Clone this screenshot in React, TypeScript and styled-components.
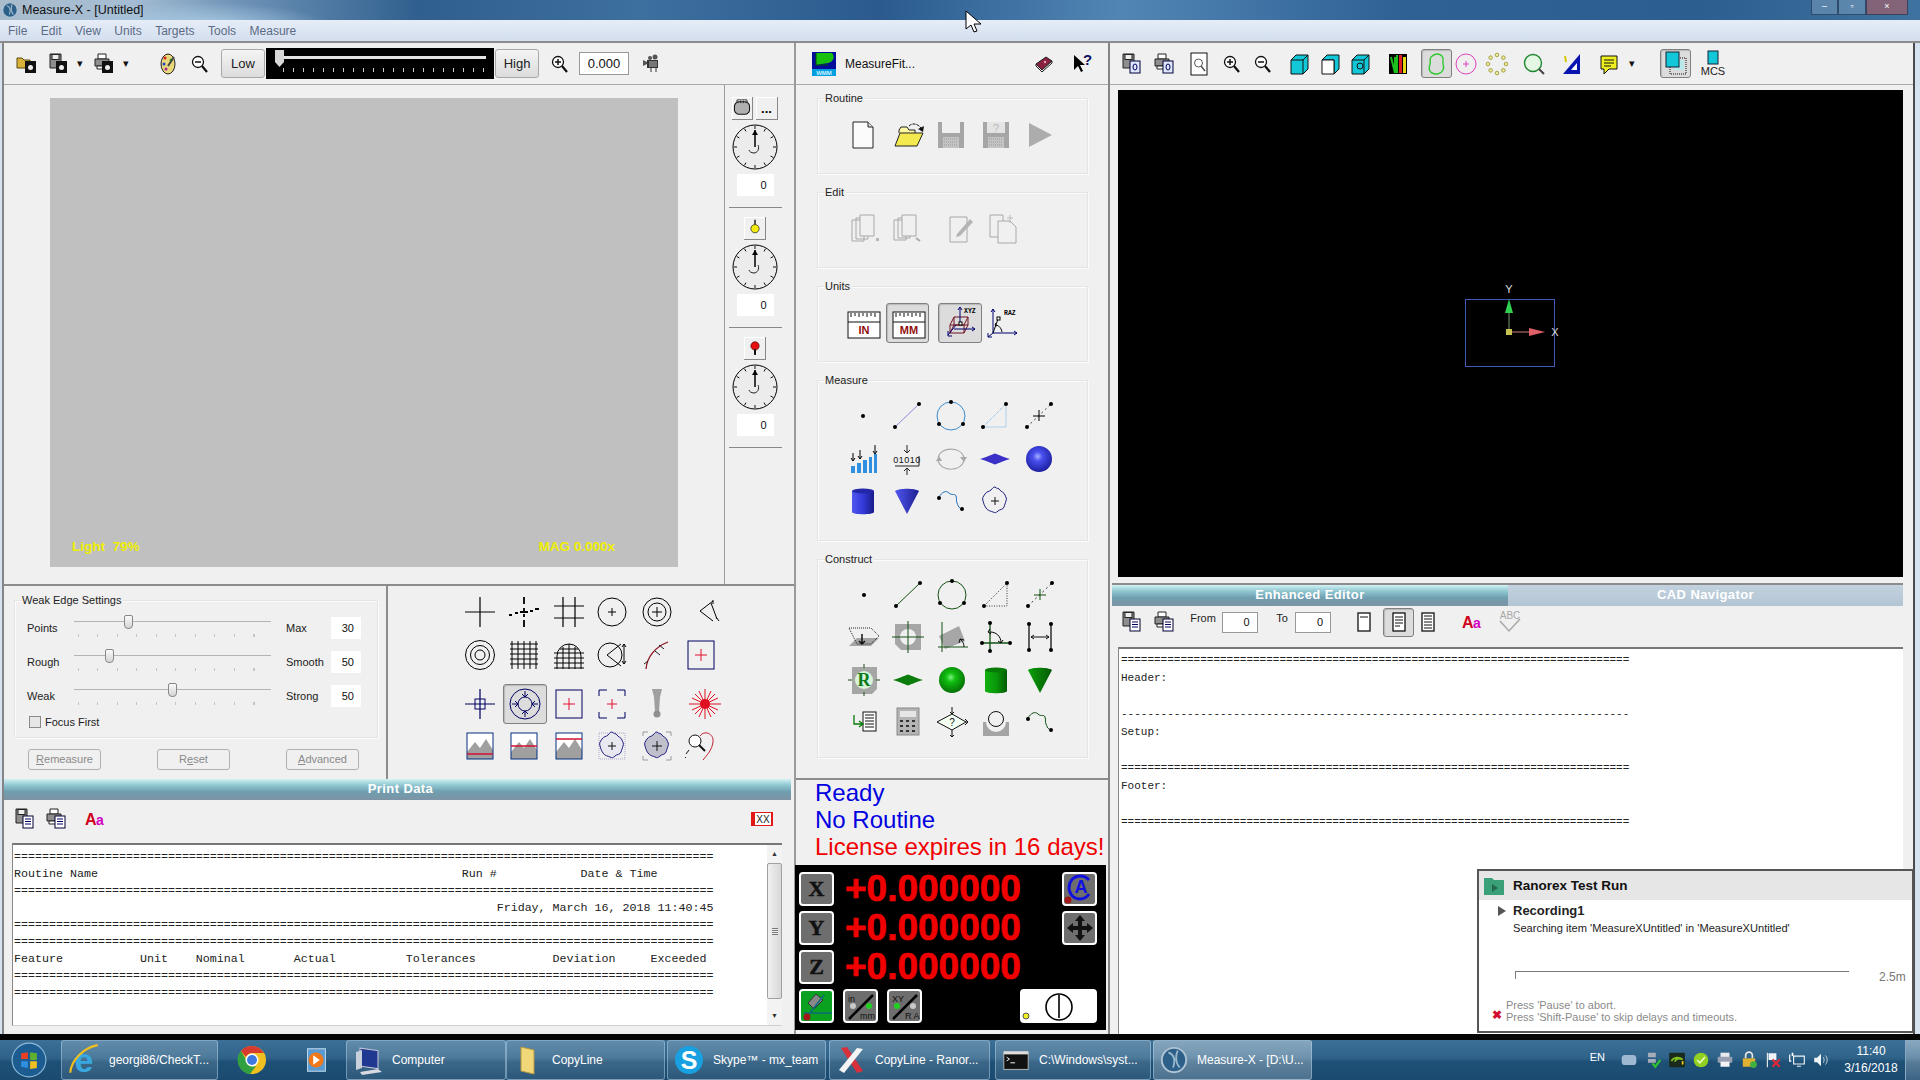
import React, { FC, ReactNode } from 'react';
import styled, { createGlobalStyle } from 'styled-components';

const GlobalStyle = createGlobalStyle`
  html, body {
    margin: 0;
    width: 1920px;
    height: 1080px;
    overflow: hidden;
    background: #000;
    font-family: "Liberation Sans", Arial, sans-serif;
  }
  * { box-sizing: border-box; }
`;

const Screen = styled.div`
  position: relative;
  width: 1920px;
  height: 1080px;
  display: flex;
  flex-direction: column;
  background: #000;
`;
const TitleBar = styled.div`
  height: 20px;
  display: flex;
  align-items: center;
  padding-left: 1px;
  gap: 3px;
  font-size: 12.5px;
  color: #111;
  background:
    radial-gradient(ellipse 130px 24px at 200px 26px, #a9cbe4 0, rgba(169, 203, 228, 0) 100%),
    linear-gradient(90deg, #a9bccd 0, #a5bdd3 130px, #6d92b6 240px, #2f5f8e 420px, #3d6f9f 640px, #2b5b8e 880px, #5186b4 1120px, #2f6195 1400px, #2c5e90 1700px, #3f739f 1920px);
`;
const TitleButtons = styled.div`
  margin-left: auto;
  margin-right: 12px;
  display: flex;
  align-self: flex-start;
`;
const TitleButton = styled.div<{ $w: number; $c: string }>`
  width: ${(p) => p.$w}px;
  height: 15px;
  border: 1px solid rgba(30, 50, 80, 0.7);
  border-top: 0;
  background: ${(p) => p.$c};
  color: #fff;
  font-size: 9px;
  line-height: 13px;
  text-align: center;
`;
const MenuBar = styled.div`
  height: 21px;
  display: flex;
  align-items: center;
  gap: 13.5px;
  padding-left: 8px;
  font-size: 12px;
  color: #5c6c86;
  background: linear-gradient(#e6edf7, #d3deee);
`;
const Workspace = styled.div`
  height: 993px;
  display: grid;
  grid-template-columns: 794px 314px 1fr;
  padding: 0 5px 0 2px;
  border-top: 2px solid #8c8c8c;
  background: #d7e2f0;
`;
const Gap = styled.div`
  height: 6px;
  background: #050505;
`;
const Taskbar = styled.div`
  height: 40px;
  display: flex;
  align-items: stretch;
  color: #fff;
  font-size: 12px;
  background: linear-gradient(#3c7096 0, #2e6289 45%, #1e5076 55%, #1a4a70 100%);
`;

const LeftCol = styled.div`
  display: flex;
  flex-direction: column;
  background: #f0f0f0;
  border-left: 2px solid #858585;
  border-right: 2px solid #9a9a9a;
`;
const MidCol = styled.div`
  display: flex;
  flex-direction: column;
  background: #f0f0f0;
  border-right: 2px solid #858585;
`;
const RightCol = styled.div`
  display: flex;
  flex-direction: column;
  background: #f0f0f0;
  border-right: 2px solid #4a4a4a;
`;
const TopBar = styled.div`
  height: 42px;
  flex: none;
  display: flex;
  align-items: center;
  border-bottom: 1px solid #a8a8a8;
`;

const RowBox = styled.div<{ $mt?: number; $h?: number }>`
  display: flex;
  align-items: center;
  height: ${(p) => p.$h ?? 32}px;
  margin-top: ${(p) => p.$mt ?? 0}px;
  flex: none;
`;
const Tool = styled.div<{ $ml: number; $w: number; $h: number; $on?: boolean }>`
  flex: none;
  margin-left: ${(p) => p.$ml}px;
  width: ${(p) => p.$w}px;
  height: ${(p) => p.$h}px;
  display: flex;
  align-items: center;
  justify-content: center;
  font-size: 11px;
  color: #111;
  border-radius: 3px;
  ${(p) =>
    p.$on
      ? 'background:#dcdcdc;border:1px solid #808080;box-shadow:inset 1px 1px 1px #b8b8b8;'
      : ''}
`;
const Svg = styled.svg`
  display: block;
  flex: none;
  overflow: visible;
`;

type Item = { x: number; n?: string; w?: number; h?: number; on?: boolean; node?: ReactNode };

const Icon: FC<{ n: string; s?: number }> = ({ n, s = 32 }) => (
  <Svg viewBox="0 0 32 32" width={s} height={s}>
    {G[n]}
  </Svg>
);

const ToolRow: FC<{ origin: number; items: Item[]; mt?: number; h?: number }> = ({ origin, items, mt, h }) => {
  let cur = origin;
  return (
    <RowBox $mt={mt} $h={h}>
      {items.map((it, i) => {
        const w = it.w ?? 32;
        const ml = it.x - w / 2 - cur;
        cur = it.x + w / 2;
        return (
          <Tool key={i} $ml={ml} $w={w} $h={it.h ?? 32} $on={it.on}>
            {it.node ?? (it.n ? <Icon n={it.n} /> : null)}
          </Tool>
        );
      })}
    </RowBox>
  );
};

/* small shared drawings */
const dot = (x: number, y: number, c = '#000', r = 2) => <circle cx={x} cy={y} r={r} fill={c} />;
const floppy = (
  <>
    <path d="M8 6h11v14H8z" fill="#8e8e8e" stroke="#222" />
    <rect x="10" y="6.5" width="7" height="5" fill="#eee" stroke="#222" />
  </>
);
const printer = (
  <>
    <path d="M10 6h8v5h-8z" fill="#fff" stroke="#222" />
    <path d="M7 11h14v7H7z" fill="#8e8e8e" stroke="#222" />
    <path d="M9 18h9v3H9z" fill="#fff" stroke="#222" />
  </>
);
const listBadge = (
  <>
    <rect x="15" y="13" width="10" height="12" fill="#fff" stroke="#003" />
    <path d="M17 16h6M17 18.500h6M17 21h6" stroke="#006" />
  </>
);
const zeroBadge = (
  <>
    <rect x="15" y="13" width="10" height="12" fill="#dfe6ff" stroke="#003" />
    <ellipse cx="20" cy="19" rx="2" ry="3" fill="none" stroke="#005" />
  </>
);
const camBadge = (
  <>
    <rect x="14" y="13" width="11" height="12" fill="#111" />
    <circle cx="19.500" cy="19.500" r="2.500" fill="#eee" />
  </>
);
const mag = (sign: string) => (
  <>
    <circle cx="15" cy="14" r="5.500" fill="#fff" stroke="#111" strokeWidth="1.300" />
    <path d="M19 18l5 6" stroke="#111" strokeWidth="2.200" />
    <path d={sign} stroke="#111" strokeWidth="1.500" />
  </>
);
const Aa = (
  <>
    <text x="6" y="22" fontFamily="Liberation Sans" fontWeight="700" fontSize="16" fill="#d00020">
      A
    </text>
    <text x="17" y="22" fontFamily="Liberation Sans" fontWeight="700" fontSize="14" fill="#d000c0">
      a
    </text>
  </>
);
const wiggly = 'M4 12c3-5 7-7 10-4s6 0 7 3 0 5 1 7 1 4 3 5';
const blobPath = 'M16 2c2 2 4 1 5 3s4 2 5 5 2 3 1 6-1 3-2 6-4 2-6 4-3 2-5 1-5-1-7-4-2-4-3-7 0-4 2-7 4-2 6-4 2-3 4-3z';
const mount = (line: number) => (
  <>
    <rect x="3" y="3" width="26" height="26" fill="#fff" />
    <path d="M3 22l8-10 5 6 6-9 7 11v9H3z" fill="#a0a0a0" />
    <rect x="3" y="3" width="26" height="26" fill="none" stroke="#003080" />
    <path d={`M3 ${line}h26`} stroke="#d01030" strokeWidth="1.500" />
  </>
);
const ruler = (t: string) => (
  <>
    <rect x="1" y="5" width="32" height="26" fill="#fff" stroke="#111" />
    <path d="M1 15h32" stroke="#111" />
    <path d="M4 6v4M8 6v3M12 6v4M16 6v3M20 6v4M24 6v3M28 6v4" stroke="#111" />
    <text x="17" y="27" textAnchor="middle" fontFamily="Liberation Sans" fontWeight="700" fontSize="11" fill="#901010">
      {t}
    </text>
  </>
);

const G: Record<string, ReactNode> = {
  openCam: (
    <>
      <path d="M6 10h5l2 2h6v8H6z" fill="#d9b23a" stroke="#5a4a10" />
      {camBadge}
    </>
  ),
  saveCam: <>{floppy}{camBadge}</>,
  printCam: <>{printer}{camBadge}</>,
  palette: (
    <>
      <ellipse cx="16" cy="16" rx="7" ry="10" fill="#e8d87a" stroke="#222" />
      {dot(13, 10, '#d02020', 1.500)}
      {dot(19, 12, '#20a020', 1.500)}
      {dot(12, 16, '#2040d0', 1.500)}
      {dot(14, 21, '#a020a0', 1.500)}
      <path d="M22 9l-6 9" stroke="#444" strokeWidth="2" />
    </>
  ),
  zoomOut: mag('M12 14h6'),
  zoomIn: mag('M12 14h6M15 11v6'),
  movie: (
    <>
      <rect x="12" y="12" width="11" height="8" fill="#333" />
      <circle cx="15" cy="10" r="2" fill="#555" />
      <circle cx="20" cy="9" r="2.500" fill="#555" />
      <path d="M12 14l-4-2v6l4-2z" fill="#555" />
      <path d="M16 20v4M21 20v4" stroke="#333" />
      <path d="M14 14h8M14 16h8M14 18h8" stroke="#bbb" />
    </>
  ),
  logo: (
    <>
      <rect x="4" y="4" width="24" height="24" fill="#000c9a" />
      <path d="M8 5h16c3 4 2 8-4 10l-12 2z" fill="#18c010" />
      <path d="M8 5v12h12" fill="none" stroke="#045004" />
      <rect x="4" y="21" width="24" height="7" fill="#00a0e0" />
      <text x="16" y="27" textAnchor="middle" fontFamily="Liberation Sans" fontWeight="700" fontSize="6" fill="#d0f0ff">
        WMM
      </text>
    </>
  ),
  book: (
    <>
      <path d="M8 16l10-7 6 4-10 9z" fill="#8a2040" stroke="#222" />
      <path d="M8 16v2l6 6 10-9v-2l-10 9z" fill="#eee" stroke="#222" />
      {dot(17, 14, '#e8a0b0', 1.200)}
    </>
  ),
  help: (
    <>
      <path d="M9 7v15l4-4 3 6 2-1-3-6h5z" fill="#000" />
      <text x="18" y="17" fontFamily="Liberation Sans" fontWeight="700" fontSize="15" fill="#101060">
        ?
      </text>
    </>
  ),
  doc: (
    <>
      <path d="M6 3h15l5 5v21H6z" fill="#fbfbfb" stroke="#222" />
      <path d="M21 3v5h5" fill="#ddd" stroke="#222" />
    </>
  ),
  open: (
    <>
      <path d="M6 14v-3l2-3h6l2 3h6v3" fill="#fff8a0" stroke="#222" />
      <path d="M2 27l5-13h23l-6 13z" fill="#f4ea50" stroke="#222" />
      <path d="M16 7c3-3 8-3 12 2" fill="none" stroke="#111" strokeDasharray="3 1" />
      <path d="M31 7l-1 6-5-3z" fill="#111" />
    </>
  ),
  saveGray: (
    <>
      <path d="M3 3h26v26H3z" fill="#a6a6a6" />
      <rect x="7" y="3" width="18" height="11" fill="#efefef" />
      <rect x="8" y="18" width="16" height="11" fill="#c4c4c4" />
      <path d="M9 20h14M9 23h14M9 26h14" stroke="#999" strokeDasharray="1 1" />
    </>
  ),
  saveAsGray: (
    <>
      <path d="M3 3h26v26H3z" fill="#a6a6a6" />
      <rect x="7" y="3" width="18" height="11" fill="#e4e4e4" />
      <text x="16" y="13" textAnchor="middle" fontFamily="Liberation Sans" fontSize="11" fill="#bbb">
        ?
      </text>
      <rect x="8" y="18" width="16" height="11" fill="#c4c4c4" />
      <path d="M9 20h14M9 23h14M9 26h14" stroke="#999" strokeDasharray="1 1" />
    </>
  ),
  playGray: <path d="M5 4l23 12-23 12z" fill="#acacac" />,
  copyA: (
    <>
      <path d="M4 8h12v21H4zM8 6h12v21H8z" fill="#f0f0f0" stroke="#a8a8a8" />
      <path d="M12 3h14v21H12z" fill="#f0f0f0" stroke="#a8a8a8" />
      <path d="M28 26h3v3h-3z" fill="#b8b8b8" />
    </>
  ),
  copyB: (
    <>
      <path d="M3 8h12v20H3zM7 6h12v20H7z" fill="#f0f0f0" stroke="#a8a8a8" />
      <path d="M11 3h14v21H11z" fill="#f0f0f0" stroke="#a8a8a8" />
      <path d="M25 26l4 3" stroke="#aaa" strokeWidth="2" />
    </>
  ),
  pencilDoc: (
    <>
      <path d="M7 5h17v25H7z" fill="#f0f0f0" stroke="#a8a8a8" />
      <path d="M14 22l13-15 3 3-13 14-4 1z" fill="#b4b4b4" />
    </>
  ),
  pasteDoc: (
    <>
      <path d="M3 3h13v22H3z" fill="#f0f0f0" stroke="#a8a8a8" />
      <path d="M11 9h12l6 6v16H11z" fill="#f0f0f0" stroke="#a8a8a8" />
      <path d="M23 3v8M26 6h-6" stroke="#bbb" />
    </>
  ),
  inch: ruler('IN'),
  mm: ruler('MM'),
  xyz: (
    <>
      <path d="M6 26l4-8h14l-4 8zM10 18v-8h14v8M6 26v-8l4-8M20 26v-8l4-8M6 18h14" fill="none" stroke="#701020" />
      <path d="M16 1v14M14 3l2-3 2 3M4 28l8-10M4 24v5h4M10 22h21M28 20l3 2-3 2" fill="none" stroke="#000070" />
      <rect x="15" y="15" width="3" height="3" fill="#fff" stroke="#000" />
      <text x="20" y="6" fontFamily="Liberation Mono" fontWeight="700" fontSize="6.500" fill="#000">
        XYZ
      </text>
    </>
  ),
  raz: (
    <>
      <path d="M6 2v24M4 5l2-3 2 3M6 26H30M27 24l3 2-3 2M6 26l-5 4M1 26v4h4" fill="none" stroke="#000070" />
      <path d="M6 26l5-14" stroke="#000" />
      <rect x="10" y="10" width="3" height="3" fill="#fff" stroke="#000" />
      <path d="M8 18c3 0 6 2 7 7M9 16l-1 2 2 1" fill="none" stroke="#000" />
      <text x="17" y="8" fontFamily="Liberation Mono" fontWeight="700" fontSize="6.500" fill="#000">
        RAZ
      </text>
    </>
  ),
  pt: dot(16, 16),
  mLine: <><path d="M4 27L28 4" stroke="#8c8cd8" />{dot(4, 27)}{dot(28, 4)}</>,
  mCircle: <><circle cx="16" cy="16" r="14" fill="none" stroke="#3a8ad0" />{dot(16, 2)}{dot(4, 24)}{dot(28, 24)}</>,
  mAngle: <><path d="M4 27L27 4v23z" fill="none" stroke="#70b0e0" strokeDasharray="1 1" />{dot(4, 27)}{dot(27, 4)}</>,
  mCross: <><path d="M4 27L28 4" stroke="#444" strokeDasharray="2 3" /><path d="M16 10v11M10 16h12" stroke="#000" />{dot(4, 27)}{dot(28, 4)}</>,
  scan: (
    <>
      <path d="M4 23h4v7H4zM10 20h4v10h-4zM16 17h4v13h-4zM22 14h3v16h-3zM27 11h3v19h-3z" fill="#2f8fe0" />
      <path d="M6 10v8M4 15l2 3 2-3M13 7v9M11 13l2 3 2-3M28 2v9M26 8l2 3 2-3" fill="none" stroke="#000" />
    </>
  ),
  binary: (
    <>
      <text x="16" y="20" textAnchor="middle" fontFamily="Liberation Sans" fontSize="9" letterSpacing=".5" fill="#111">
        01010
      </text>
      <path d="M4 23h24V13M16 2v8M13 7l3 3 3-3M16 32v-7M13 28l3-3 3 3" fill="none" stroke="#222" />
    </>
  ),
  rotate: (
    <>
      <path d="M3 14C6 4 25 3 29 14M29 18C25 29 7 29 3 18" fill="none" stroke="#a8a8a8" strokeWidth="1.200" />
      <path d="M1 18l3-5 3 5zM25 14l4 5 3-5z" fill="#a8a8a8" />
    </>
  ),
  plane: <path d="M1 16C8 14 12 12 16 10.500 20 12 24 14 31 16 24 18 20 20 16 21.500 12 20 8 18 1 16z" fill="#3a30c8" />,
  sphere: (
    <>
      <defs>
        <radialGradient id="bsph" cx="45%" cy="40%" r="60%">
          <stop offset="0" stopColor="#a8b0ff" />
          <stop offset=".3" stopColor="#4a50f0" />
          <stop offset="1" stopColor="#1c20a0" />
        </radialGradient>
      </defs>
      <circle cx="16" cy="16" r="13" fill="url(#bsph)" />
    </>
  ),
  cyl: (
    <>
      <defs>
        <linearGradient id="bcyl">
          <stop offset="0" stopColor="#5058f0" />
          <stop offset=".5" stopColor="#3438d8" />
          <stop offset="1" stopColor="#181c88" />
        </linearGradient>
      </defs>
      <path d="M5 6v21c0 3 22 3 22 0V6z" fill="url(#bcyl)" />
      <ellipse cx="16" cy="6" rx="11" ry="2.500" fill="#2428a8" />
    </>
  ),
  cone: (
    <>
      <defs>
        <linearGradient id="bcon">
          <stop offset="0" stopColor="#5058f0" />
          <stop offset="1" stopColor="#1c1e90" />
        </linearGradient>
      </defs>
      <path d="M4 6c4-3 20-3 24 0L16 29z" fill="url(#bcon)" />
    </>
  ),
  curve: <><path d={wiggly} fill="none" stroke="#2070c0" />{dot(4, 13)}{dot(27, 24)}</>,
  blob: <><path d={blobPath} fill="none" stroke="#202080" /><path d="M16 12v8M12 16h8" stroke="#111" /></>,
  cPt: dot(16, 16),
  cLine: <><path d="M4 27L28 4" stroke="#125012" />{dot(4, 27)}{dot(28, 4)}</>,
  cCircle: <><circle cx="16" cy="16" r="14" fill="none" stroke="#125012" />{dot(16, 2)}{dot(4, 24)}{dot(28, 24)}</>,
  cAngle: <><path d="M4 27L27 4v23z" fill="none" stroke="#333" strokeDasharray="1 1.500" />{dot(4, 27)}{dot(27, 4)}</>,
  cCross: <><path d="M4 27L28 4" stroke="#333" strokeDasharray="2 3" /><path d="M16 10v11M10 16h12" stroke="#125012" />{dot(4, 27)}{dot(28, 4)}</>,
  projPlane: (
    <>
      <path d="M1 25l8-8h22l-8 8z" fill="#a4a4a4" />
      <path d="M1 7h22l8 8-8 8H9z" fill="none" stroke="#222" strokeDasharray="1 1" />
      <path d="M14 13v10M11 20l3 3 3-3" fill="none" stroke="#111" strokeWidth="1.500" />
    </>
  ),
  discGray: (
    <>
      <path d="M3 3h26v26H9l-6-6z" fill="#a6a6a6" />
      <circle cx="16" cy="16" r="8" fill="#f0f0f0" />
      <path d="M16 0v32M0 16h32" stroke="#125012" />
    </>
  ),
  tilted: (
    <>
      <path d="M3 15L23 5l6 15-20 8z" fill="#a6a6a6" />
      <path d="M6 1v30M2 26h30" stroke="#125012" />
      <path d="M24 18c3 2 4 5 4 8M23 22l1-4 4 1" fill="none" stroke="#111" />
    </>
  ),
  axes: (
    <>
      <path d="M10 2v28M2 22h26" stroke="#125012" strokeWidth="1.300" />
      <path d="M10 11c6 0 11 4 11 11M10 8l-2 3 3 2M23 19l-2 3-3-2" fill="none" stroke="#000" />
      {dot(10, 2)}{dot(10, 30)}{dot(2, 22)}{dot(30, 22)}
    </>
  ),
  dist: (
    <>
      <path d="M5 3v26M27 3v26" stroke="#111" strokeWidth="1.300" />
      <path d="M7 16h18M10 14l-3 2 3 2M22 14l3 2-3 2" fill="none" stroke="#111" />
      {dot(5, 3)}{dot(5, 29)}{dot(27, 3)}{dot(27, 29)}
    </>
  ),
  rad: (
    <>
      <path d="M4 3h25v22l-5 5H4z" fill="#a6a6a6" />
      <circle cx="16" cy="16" r="9" fill="#d8f4d8" />
      <path d="M16 0v4M16 28v4M0 16h4M28 16h4" stroke="#125012" />
      <text x="16" y="22" textAnchor="middle" fontFamily="Liberation Serif" fontWeight="700" fontSize="18" fill="#0a7a1a">
        R
      </text>
    </>
  ),
  gPlane: <path d="M1 16C8 14 12 12 16 10.500 20 12 24 14 31 16 24 18 20 20 16 21.500 12 20 8 18 1 16z" fill="#0c7c0c" />,
  gSphere: (
    <>
      <defs>
        <radialGradient id="gsph" cx="45%" cy="40%" r="60%">
          <stop offset="0" stopColor="#80f080" />
          <stop offset=".3" stopColor="#10c010" />
          <stop offset="1" stopColor="#067006" />
        </radialGradient>
      </defs>
      <circle cx="16" cy="16" r="13" fill="url(#gsph)" />
    </>
  ),
  gCyl: (
    <>
      <defs>
        <linearGradient id="gcyl">
          <stop offset="0" stopColor="#10b010" />
          <stop offset=".5" stopColor="#0a9a0a" />
          <stop offset="1" stopColor="#045a04" />
        </linearGradient>
      </defs>
      <path d="M5 6v21c0 3 22 3 22 0V6z" fill="url(#gcyl)" />
      <ellipse cx="16" cy="6" rx="11" ry="2.500" fill="#087a08" />
    </>
  ),
  gCone: (
    <>
      <defs>
        <linearGradient id="gcon">
          <stop offset="0" stopColor="#0aa00a" />
          <stop offset="1" stopColor="#055805" />
        </linearGradient>
      </defs>
      <path d="M4 6c4-3 20-3 24 0L16 29z" fill="url(#gcon)" />
    </>
  ),
  listArrow: (
    <>
      <rect x="15" y="6" width="13" height="19" fill="#fff" stroke="#111" />
      <path d="M17 9h9M17 12h9M17 15h9M17 18h9M17 21h9" stroke="#111" />
      <path d="M6 9v9h8M11 15l4 3-4 3" fill="none" stroke="#0a7a0a" strokeWidth="1.300" />
    </>
  ),
  calc: (
    <>
      <rect x="5" y="2" width="22" height="27" fill="#b4b4b4" stroke="#888" />
      <rect x="8" y="5" width="16" height="6" fill="#e6e6e6" />
      <path d="M8 14h3v2H8zM14 14h3v2h-3zM20 14h3v2h-3zM8 19h3v2H8zM14 19h3v2h-3zM20 19h3v2h-3zM8 24h3v2H8zM14 24h3v2h-3zM20 24h3v2h-3z" fill="#333" />
    </>
  ),
  decide: (
    <>
      <path d="M1 16l15-8 14 8-14 8z" fill="#f4fff4" stroke="#111" />
      <text x="16" y="20" textAnchor="middle" fontFamily="Liberation Sans" fontSize="10" fill="#111">
        ?
      </text>
      <path d="M16 1v7M14 6l2 2 2-2M16 24v7M14 29l2 2 2-2M30 16h2M29 13l3 3-3 3" fill="none" stroke="#111" />
    </>
  ),
  holeGray: (
    <>
      <path d="M3 16h3a10 10 0 0 0 20 0h3v14H3z" fill="#a4a4a4" />
      <circle cx="16" cy="13" r="7.500" fill="#f0f0f0" stroke="#111" />
    </>
  ),
  gCurve: <><path d={wiggly} fill="none" stroke="#125012" />{dot(4, 13)}{dot(27, 24)}</>,
  tPlus: <path d="M16 1v30M1 16h30" stroke="#000" strokeWidth="1.200" />,
  tDash: <path d="M16 1v7M16 12v3M16 18v3M16 24v7M1 19h3M7 17h3M12 16h8M22 15h3M27 13h4" stroke="#000" strokeWidth="1.800" />,
  tHash: <path d="M10 1v30M22 1v30M1 10h30M1 22h30" stroke="#000" strokeWidth="1.200" />,
  tCirc: <><circle cx="16" cy="16" r="14" fill="none" stroke="#000" /><path d="M16 12v8M12 16h8" stroke="#000" /></>,
  tRings: <><circle cx="16" cy="16" r="14" fill="none" stroke="#000" /><circle cx="16" cy="16" r="9" fill="none" stroke="#000" /><path d="M16 11v10M11 16h10" stroke="#000" /></>,
  tCone: <path d="M22 5L9 15l13 10M20 7l6 16M22 4v4M25 21l3 4" fill="none" stroke="#000" />,
  t3Ring: <><circle cx="16" cy="16" r="14.500" fill="none" stroke="#000" /><circle cx="16" cy="16" r="9.500" fill="none" stroke="#000" /><circle cx="16" cy="16" r="5" fill="none" stroke="#000" /></>,
  tGrid: <path d="M4 2v28M10 2v28M16 2v28M22 2v28M28 2v28M2 5h28M2 10h28M2 15h28M2 20h28M2 25h28" stroke="#000" strokeWidth="1" />,
  tArch: <path d="M4 30V17a12 12 0 0 1 24 0v13M10 8v22M16 5v25M22 8v22M1 14h30M1 19h30M1 24h30M1 29h30M7 10h18" fill="none" stroke="#000" />,
  tArrow: <><circle cx="14" cy="16" r="12" fill="none" stroke="#000" /><path d="M25 5L11 16l14 11M28 5v20M26 8l2-3 2 3M26 22l2 3 2-3" fill="none" stroke="#000" /></>,
  tArc: <><path d="M5 30C6 18 14 8 27 3" fill="none" stroke="#8a1020" strokeWidth="1.300" /><path d="M7 22l-4 3M14 12l5 4M18 6l5 4" stroke="#222" /></>,
  tSquare: <><rect x="3" y="2" width="26" height="28" fill="none" stroke="#000060" /><path d="M16 10v12M10 16h12" stroke="#e01030" /></>,
  tCrossSq: <><path d="M16 1v30M1 16h30" stroke="#000060" strokeWidth="1.200" /><rect x="11" y="11" width="10" height="10" fill="none" stroke="#000060" /></>,
  tTarget: (
    <>
      <circle cx="16" cy="16" r="15" fill="none" stroke="#000060" />
      <circle cx="16" cy="16" r="7" fill="none" stroke="#000060" />
      <path d="M16 3v6M13 6l3 3 3-3M16 29v-6M13 26l3-3 3 3M3 16h6M6 13l3 3-3 3M29 16h-6M26 13l-3 3 3 3" fill="none" stroke="#000060" />
    </>
  ),
  tBrackets: <><path d="M3 8V2h8M21 2h8v6M29 24v6h-8M11 30H3v-6" fill="none" stroke="#000060" /><path d="M16 11v10M11 16h10" stroke="#e01030" /></>,
  tProbe: <><path d="M11 1h10l-2 8-1 15h-4l-1-15z" fill="#a0a0a0" /><circle cx="16" cy="26" r="3.500" fill="#909090" /></>,
  tLaser: (
    <>
      <path d="M0 16h32M16 1v30M6 6l20 20M26 6L6 26M10 3l12 26M22 3L10 29M3 10l26 12M29 10L3 22" stroke="#e01020" />
      <circle cx="16" cy="16" r="5" fill="#e01020" />
    </>
  ),
  tMt1: mount(24),
  tMt2: mount(16),
  tMt3: mount(9),
  tBlob: (
    <>
      <rect x="3" y="3" width="26" height="26" fill="none" stroke="#a8a8c8" strokeDasharray="1 1" />
      <path d={blobPath} fill="#e8e8f0" stroke="#202080" />
      <path d="M16 12v8M12 16h8" stroke="#111" />
    </>
  ),
  tBlobFill: (
    <>
      <path d="M2 6V2h5M25 2h5v4M30 26v4h-5M7 30H2v-4" fill="none" stroke="#999" />
      <path d={blobPath} fill="#c0c0cc" stroke="#202080" />
      <path d="M16 11v10M11 16h10" stroke="#111" />
    </>
  ),
  tHeart: (
    <>
      <path d="M16 6c4-6 14-3 13 6-1 8-6 13-10 18" fill="none" stroke="#c02030" />
      <circle cx="11" cy="11" r="6" fill="#fff" stroke="#111" />
      <path d="M15 15l6 6" stroke="#111" strokeWidth="2" />
      <path d="M5 20l-3 4M1 27l1 1" stroke="#111" />
    </>
  ),
  saveZero: <>{floppy}{zeroBadge}</>,
  printZero: <>{printer}{zeroBadge}</>,
  zoomFit: (
    <>
      <rect x="8" y="5" width="16" height="22" fill="#fff" stroke="#111" />
      <circle cx="15.500" cy="15" r="4" fill="none" stroke="#555" />
      <path d="M18 18l4 5" stroke="#555" strokeWidth="1.500" />
    </>
  ),
  cubeA: <path d="M8 12l5-5h12v14l-5 5H8zM8 12h12v14M20 12l5-5" fill="#12c8d8" stroke="#111" />,
  cubeB: (
    <>
      <path d="M8 12l5-5h12v14l-5 5V12z" fill="#12c8d8" stroke="#111" />
      <path d="M8 12h12v14H8z" fill="#fff" stroke="#111" />
    </>
  ),
  cubeC: (
    <>
      <path d="M8 12l5-5h12v14l-5 5H8zM8 12h12v14M20 12l5-5" fill="#12c8d8" stroke="#111" />
      <circle cx="16" cy="18" r="3" fill="none" stroke="#111" />
    </>
  ),
  bars: (
    <>
      <rect x="7" y="6" width="18" height="20" fill="#000" />
      <path d="M9 9l4 16V9M15 7v18" fill="none" stroke="#1cc01c" strokeWidth="2" />
      <path d="M17 7h3v18h-3z" fill="#e02020" />
      <path d="M21 9h3v16h-3z" fill="#e8d810" />
    </>
  ),
  gBlob: <path d="M16 6c4 0 7 3 6 7-1 3 2 5 0 9s-7 5-11 3-3-6-2-9-1-5 1-7 3-3 6-3z" fill="none" stroke="#30c830" strokeWidth="1.400" />,
  pinkCirc: <><circle cx="16" cy="16" r="10" fill="none" stroke="#e040c0" /><path d="M16 13v6M13 16h6" stroke="#e040c0" /></>,
  yellowDots: (
    <>
      {[0, 45, 90, 135, 180, 225, 270, 315].map((a) => (
        <circle key={a} cx={16 + 9 * Math.cos((a * Math.PI) / 180)} cy={16 + 9 * Math.sin((a * Math.PI) / 180)} r="1.800" fill="#ece8a0" stroke="#8a8610" strokeWidth=".7" />
      ))}
    </>
  ),
  greenMag: <><circle cx="15" cy="15" r="8.500" fill="#e4f6e4" stroke="#208830" strokeWidth="1.400" /><path d="M21 21l5 5" stroke="#444" strokeWidth="2" /></>,
  triangle: <><path d="M6 26L23 6v20z" fill="#0814b0" /><path d="M20 15v7h-6z" fill="#fff" /><path d="M8 8l1 6" stroke="#d8c800" strokeWidth="2" /></>,
  note: (
    <>
      <path d="M8 8h16v13H16l-5 5v-5H8z" fill="#f0f020" stroke="#111" />
      <path d="M11 12h10M11 15h10M11 18h7" stroke="#111" />
    </>
  ),
  layers: (
    <>
      <rect x="10" y="10" width="16" height="16" fill="none" stroke="#111" strokeDasharray="1 1" />
      <rect x="14" y="12" width="10" height="10" fill="#b8e8ec" />
      <rect x="6" y="4" width="13" height="15" fill="#12c8d8" stroke="#123" />
    </>
  ),
  floppyList: <>{floppy}{listBadge}</>,
  printList: <>{printer}{listBadge}</>,
  Aa,
  abc: (
    <>
      <text x="16" y="13" textAnchor="middle" fontFamily="Liberation Sans" fontSize="10" fill="#a8a8a8">
        ABC
      </text>
      <path d="M6 15l9 10 11-12" fill="none" stroke="#a8a8a8" strokeWidth="1.500" />
    </>
  ),
  page1: <><rect x="10" y="7" width="12" height="18" fill="#fff" stroke="#111" strokeWidth="1.300" /><path d="M12 11h8" stroke="#111" /></>,
  page2: <><rect x="10" y="7" width="12" height="18" fill="#fff" stroke="#111" strokeWidth="1.300" /><path d="M12 11h8M12 14h8M12 17h8M12 20h5" stroke="#111" /></>,
  page3: <><rect x="10" y="7" width="12" height="18" fill="#fff" stroke="#111" strokeWidth="1.300" /><path d="M12 10h8M12 13h8M12 16h8M12 19h8M12 22h8" stroke="#111" /></>,
  xx: (
    <>
      <rect x="5" y="9" width="22" height="14" fill="#e01818" />
      <rect x="9" y="10" width="16" height="12" fill="#fff" />
      <text x="17" y="20" textAnchor="middle" fontFamily="Liberation Sans" fontSize="10" fill="#222">
        XX
      </text>
    </>
  ),
  lens: <><rect x="5" y="7" width="22" height="18" rx="7" fill="#b0b0b0" stroke="#111" strokeWidth="1.500" /><path d="M8 7l1-3h14l1 3M10 5v4M14 5v4M18 5v4M22 5v4" fill="none" stroke="#111" /></>,
  bulbY: <><path d="M15 4h2v7h-2z" fill="#111" /><circle cx="16" cy="17" r="6" fill="#f4ec10" stroke="#111" /></>,
  bulbR: <><circle cx="16" cy="13" r="6" fill="#e81010" stroke="#400" /><path d="M14.500 18h3v8h-3z" fill="#111" /></>,
  orb: (
    <>
      <circle cx="16" cy="16" r="15" fill="#1c5c90" stroke="#8bb8d8" />
      <path d="M9 10l6-1v6H9z" fill="#e84020" />
      <path d="M17 9l6 1v6h-6z" fill="#60b030" />
      <path d="M9 17h6v6l-6-1z" fill="#2f8fe0" />
      <path d="M17 17h6v6l-6 1z" fill="#f0c020" />
    </>
  ),
  ie: (
    <>
      <text x="16" y="27" textAnchor="middle" fontFamily="Liberation Sans" fontWeight="700" fontSize="32" fill="#3aa8e0">
        e
      </text>
      <path d="M3 28C4 16 16 4 29 2" fill="none" stroke="#f0c020" strokeWidth="2" />
    </>
  ),
  chrome: (
    <>
      <circle cx="16" cy="16" r="14" fill="#f0c020" />
      <path d="M16 2a14 14 0 0 1 12 7H16a7 7 0 0 0-6 4L5 7a14 14 0 0 1 11-5z" fill="#d83a30" />
      <path d="M5 7l7 12a7 7 0 0 0 8 3l-6 8A14 14 0 0 1 5 7z" fill="#30a040" />
      <circle cx="16" cy="16" r="6.500" fill="#fff" />
      <circle cx="16" cy="16" r="5" fill="#3f78e0" />
    </>
  ),
  media: (
    <>
      <rect x="7" y="4" width="19" height="24" fill="#5a9ad0" stroke="#c8e0f0" />
      <circle cx="16" cy="16" r="8" fill="#f07818" />
      <path d="M13 11l7 5-7 5z" fill="#fff" />
    </>
  ),
  computer: (
    <>
      <rect x="8" y="3" width="18" height="18" fill="#203890" stroke="#ccd" transform="skewY(8)" />
      <path d="M4 8l6-2v18l-6 2z" fill="#c8d0dc" />
      <path d="M8 28l18-3 4 3-20 3z" fill="#d8d8e0" />
    </>
  ),
  folder: <path d="M9 3l13 3v24l-13-3z" fill="#f0d878" stroke="#b89840" />,
  skype: (
    <>
      <circle cx="16" cy="16" r="14" fill="#18a0e0" />
      <text x="16" y="25" textAnchor="middle" fontFamily="Liberation Sans" fontWeight="700" fontSize="25" fill="#fff">
        S
      </text>
    </>
  ),
  ranorexX: (
    <>
      <path d="M6 4l6-1 16 24-6 2z" fill="#d8303a" />
      <path d="M28 5l-6-1L4 26l5 3z" fill="#f4f4f4" />
    </>
  ),
  cmd: (
    <>
      <rect x="3" y="7" width="26" height="19" fill="#111" stroke="#bbb" />
      <rect x="3" y="7" width="26" height="3" fill="#ddd" />
      <path d="M6 13l3 2-3 2M10 19h5" fill="none" stroke="#fff" />
    </>
  ),
  globe: (
    <>
      <circle cx="16" cy="16" r="13" fill="#2c6088" stroke="#b0c4d4" strokeWidth="2" />
      <path d="M10 8c6 2 8 8 5 16M20 6c-3 6-2 14 2 18" fill="none" stroke="#9ab8cc" strokeWidth="2" />
    </>
  ),
  trayPill: <rect x="3" y="7" width="26" height="18" rx="6" fill="#9db8d0" />,
  trayNet: <><path d="M7 3h14v8H7zM7 14h14v7H7z" fill="#a4acb8" /><path d="M15 22l5 6 9-12" fill="none" stroke="#30c030" strokeWidth="4" /></>,
  trayNvidia: <><rect x="2" y="3" width="28" height="26" rx="2" fill="#1a2a1c" /><path d="M6 18c4-8 14-8 20-3-6-2-12-2-14 4" fill="none" stroke="#80c020" strokeWidth="3" /><path d="M26 18v6" stroke="#f0d020" strokeWidth="3" /></>,
  trayLeaf: <><circle cx="16" cy="16" r="13" fill="#90d020" /><path d="M9 16l5 5 9-10" fill="none" stroke="#eaf8c0" strokeWidth="3" /></>,
  trayPrint: <><rect x="8" y="3" width="16" height="8" fill="#e8e8ee" /><rect x="3" y="10" width="26" height="11" rx="2" fill="#9aa0b4" /><rect x="8" y="19" width="16" height="9" fill="#f4f4f8" /></>,
  trayLock: <><path d="M10 13V8a6 6 0 0 1 12 0v5" fill="none" stroke="#e8e8e8" strokeWidth="3" /><rect x="5" y="13" width="22" height="15" fill="#e0b030" /><circle cx="24" cy="24" r="6" fill="#40b040" /></>,
  trayFlag: <><path d="M6 3v26" stroke="#eee" strokeWidth="2" /><path d="M8 4h14v12H8z" fill="#f0f4f8" /><path d="M15 15l13 13M28 15L15 28" stroke="#e02838" strokeWidth="4" /></>,
  trayMonitor: <><path d="M3 6v12h3" fill="none" stroke="#fff" strokeWidth="2" /><path d="M10 9h19v14H10zM16 27h7" fill="none" stroke="#eef4f8" strokeWidth="2" /><path d="M8 3v6" stroke="#fff" strokeWidth="3" /></>,
  traySound: <><path d="M4 12h5l7-7v22l-7-7H4z" fill="#eef4f8" /><path d="M20 11c2 3 2 7 0 10M24 8c4 5 4 11 0 16" fill="none" stroke="#dde6ee" strokeWidth="1.500" /></>,
};

/* left column */
const VideoPane = styled.div`
  flex: 1;
  padding: 13px 0 0 46px;
`;
const VideoFeed = styled.div`
  width: 628px;
  height: 469px;
  background: #c0c0c0;
  display: flex;
  align-items: flex-end;
  justify-content: space-between;
  padding: 0 63px 13px 22px;
  color: #eeee00;
  font-size: 13.500px;
  font-weight: 700;
`;
const CameraArea = styled.div`
  height: 499px;
  flex: none;
  display: flex;
`;
const GaugeCol = styled.div`
  width: 70px;
  padding: 12px 9px 0 0;
  border-left: 1px solid #9c9c9c;
  display: flex;
  flex-direction: column;
  align-items: center;
`;
const GaugeButtons = styled.div`
  display: flex;
  gap: 3px;
  height: 23px;
`;
const SmallBtn = styled.div<{ $w: number }>`
  width: ${(p) => p.$w}px;
  height: 23px;
  background: #f0f0f0;
  border-right: 1px solid #888;
  border-bottom: 1px solid #888;
  box-shadow: inset 1px 1px 0 #fff;
  display: flex;
  align-items: center;
  justify-content: center;
  font-weight: 700;
  font-size: 13px;
  color: #000;
  overflow: hidden;
`;
const DialWrap = styled.div`
  margin-top: 4px;
  height: 46px;
`;
const NumBox = styled.div<{ $w: number; $h?: number }>`
  width: ${(p) => p.$w}px;
  height: ${(p) => p.$h ?? 22}px;
  background: #fff;
  font-size: 11px;
  display: flex;
  align-items: center;
  justify-content: flex-end;
  padding-right: 7px;
  color: #111;
  flex: none;
`;
const GaugeValue = styled(NumBox)`
  margin-top: 4px;
`;
const GaugeRule = styled.div`
  width: 53px;
  height: 1px;
  margin: 11px 0 9px;
  background: #888;
  flex: none;
`;
const LowHigh = styled.div`
  width: 44px;
  height: 29px;
  flex: none;
  display: flex;
  align-items: center;
  justify-content: center;
  font-size: 13px;
  color: #222;
  border: 1px solid #a8a8a8;
  border-radius: 3px;
  background: linear-gradient(#f4f4f4, #dcdcdc);
`;
const BlackSlider = styled.div`
  position: relative;
  width: 228px;
  height: 31px;
  background: #000;
  flex: none;
  padding: 8px 8px 0 17px;
`;
const BlackTrack = styled.div`
  height: 3px;
  background: #e4e4e4;
`;
const BlackTicks = styled.div`
  height: 4px;
  margin-top: 9px;
  background: repeating-linear-gradient(90deg, #ccc 0 1px, transparent 1px 10px);
`;
const SliderThumb = styled.div<{ $x: number }>`
  position: absolute;
  left: ${(p) => p.$x}px;
  top: 2px;
  width: 9px;
  height: 17px;
  background: #d8d8d8;
  clip-path: polygon(0 0, 100% 0, 100% 70%, 50% 100%, 0 70%);
`;
const ZoomValue = styled(NumBox)`
  border: 1px solid #999;
  justify-content: center;
  padding: 0;
  font-size: 13px;
  height: 23px;
  width: 50px;
`;
const SettingsRow = styled.div`
  height: 195px;
  flex: none;
  display: grid;
  grid-template-columns: 384px 1fr;
  border-top: 2px solid #8c8c8c;
`;
const SettingsPanel = styled.div`
  padding: 14px 0 0 10px;
  border-right: 2px solid #8c8c8c;
  font-size: 11px;
  color: #222;
`;
const GroupBox = styled.div<{ $h: number }>`
  position: relative;
  height: ${(p) => p.$h}px;
  flex: none;
  border: 1px solid #e4e4e4;
  box-shadow: inset 1px 1px 0 #fbfbfb, 1px 1px 0 #fbfbfb;
`;
const Legend = styled.span`
  position: absolute;
  left: 7px;
  top: -7px;
  padding-right: 2px;
  background: #f0f0f0;
  font-size: 11px;
  line-height: 13px;
  color: #222;
`;
const WeakBox = styled(GroupBox)`
  width: 364px;
  padding: 16px 0 0 12px;
  display: flex;
  flex-direction: column;
  gap: 12px;
`;
const WeakRow = styled.div`
  display: grid;
  grid-template-columns: 47px 197px 60px 30px;
  height: 22px;
  align-items: center;
`;
const RightLabel = styled.span`
  padding-left: 15px;
`;
const WeakSlider = styled.div`
  position: relative;
  height: 22px;
`;
const WeakTrack = styled.div`
  position: absolute;
  left: 0;
  right: 0;
  top: 4px;
  height: 1px;
  background: #b4b4b4;
`;
const WeakTicks = styled.div`
  position: absolute;
  left: 4px;
  right: 0;
  top: 17px;
  height: 3px;
  background: repeating-linear-gradient(90deg, #c4c4c4 0 1px, transparent 1px 19.500px);
`;
const WeakThumb = styled.div<{ $x: number }>`
  position: absolute;
  left: ${(p) => p.$x}px;
  top: -2px;
  width: 9px;
  height: 14px;
  background: linear-gradient(#fafafa, #d4d4d4);
  border: 1px solid #888;
  border-radius: 2px 2px 4px 4px;
`;
const Focus = styled.label`
  display: flex;
  align-items: center;
  gap: 4px;
  margin-top: -3px;
  margin-left: 2px;
`;
const FocusBox = styled.span`
  width: 12px;
  height: 12px;
  background: #e6e6e6;
  border: 1px solid #8a8a8a;
`;
const ActionRow = styled.div`
  display: flex;
  gap: 56px;
  margin: 11px 0 0 14px;
`;
const ActionButton = styled.div`
  width: 73px;
  height: 21px;
  border: 1px solid #b0b0b0;
  border-radius: 3px;
  background: #f0f0f0;
  color: #8a8a8a;
  font-size: 11px;
  line-height: 19px;
  text-align: center;
  u { text-decoration: underline; }
`;
const TargetPanel = styled.div`
  padding-top: 10px;
`;
const PrintPanel = styled.div`
  flex: 1;
  display: flex;
  flex-direction: column;
`;
const PanelHead = styled.div<{ $w?: string; $dim?: boolean }>`
  height: 21px;
  flex: none;
  width: ${(p) => p.$w ?? '100%'};
  background: ${(p) =>
    p.$dim
      ? 'linear-gradient(#c2d2df, #b3c4d3)'
      : 'linear-gradient(#d2f2f4 0, #8fc6d0 30%, #6f9fb0 60%, #7d93a4 100%)'};
  color: #fff;
  font-size: 13px;
  font-weight: 700;
  letter-spacing: 0.4px;
  text-align: center;
  line-height: 19px;
`;
const PrintHead = styled(PanelHead)`
  padding-left: 6px;
`;
const PrintToolbar = styled.div`
  height: 43px;
  flex: none;
  display: flex;
  align-items: center;
  padding-bottom: 6px;
`;
const PrintBox = styled.div`
  width: 770px;
  height: 183px;
  margin-left: 8px;
  display: flex;
  background: #fff;
  border-top: 2px solid #777;
  border-left: 1px solid #888;
  border-bottom: 1px solid #d0d0d0;
`;
const MonoText = styled.pre<{ $size: number; $lh: number; $pl?: number; $pt?: number }>`
  flex: 1;
  margin: 0;
  padding: ${(p) => p.$pt ?? 2}px 0 0 ${(p) => p.$pl ?? 1}px;
  font-family: "Liberation Mono", "Courier New", monospace;
  font-size: ${(p) => p.$size}px;
  line-height: ${(p) => p.$lh}px;
  color: #222;
  overflow: hidden;
`;
const Scroll = styled.div`
  width: 15px;
  flex: none;
  display: flex;
  flex-direction: column;
  align-items: center;
  background: #f3f3f3;
  color: #333;
  font-size: 7px;
`;
const ScrollArrow = styled.div<{ $end?: boolean }>`
  height: 18px;
  line-height: 18px;
  margin-top: ${(p) => (p.$end ? 'auto' : '0')};
`;
const ScrollThumb = styled.div`
  width: 15px;
  height: 136px;
  flex: none;
  background: linear-gradient(90deg, #f0f0f0, #d8d8d8);
  border: 1px solid #a0a0a0;
  border-radius: 2px;
  display: flex;
  align-items: center;
  justify-content: center;
`;
const Grip = styled.div`
  width: 6px;
  height: 7px;
  background: repeating-linear-gradient(#777 0 1px, #eee 1px 2px);
`;

/* middle column */
const FitLabel = styled.span`
  font-size: 12px;
  white-space: nowrap;
`;
const GroupStack = styled.div`
  height: 693px;
  flex: none;
  padding: 13px 0 0 21px;
  display: flex;
  flex-direction: column;
  gap: 18px;
`;
const ToolGroup = styled(GroupBox)`
  width: 271px;
`;
const GroupInner = styled.div<{ $pt: number }>`
  padding-top: ${(p) => p.$pt}px;
`;
const IconGrid = styled.div<{ $pl: number; $row: number }>`
  display: grid;
  grid-template-columns: repeat(5, 44px);
  grid-auto-rows: ${(p) => p.$row}px;
  padding: 14px 0 0 ${(p) => p.$pl}px;
  place-items: center;
`;
const Status = styled.div`
  height: 87px;
  flex: none;
  border-top: 2px solid #8c8c8c;
  padding: 0 0 0 19px;
  font-size: 24px;
  line-height: 27px;
  white-space: nowrap;
  overflow: hidden;
`;
const StatusLine = styled.div<{ $c: string; $lift?: boolean }>`
  color: ${(p) => p.$c};
  margin-top: ${(p) => (p.$lift ? '-1px' : '0')};
`;
const Dro = styled.div`
  height: 165px;
  width: 311px;
  flex: none;
  margin-left: -1px;
  padding: 7px 0 0 4px;
  background: #000;
  display: flex;
  flex-direction: column;
  gap: 5px;
`;
const DroRow = styled.div`
  display: flex;
  width: 298px;
  height: 34px;
  align-items: stretch;
`;
const DroButton = styled.div<{ $bg?: string; $w?: number; $ml?: number }>`
  width: ${(p) => p.$w ?? 35}px;
  margin-left: ${(p) => p.$ml ?? 0}px;
  flex: none;
  display: flex;
  align-items: center;
  justify-content: center;
  background: ${(p) => p.$bg ?? '#6e6e6e'};
  border: 2px solid #fff;
  border-radius: 4px;
  font-family: "Liberation Serif", serif;
  font-weight: 700;
  font-size: 22px;
  color: #111;
  -webkit-text-stroke: 0.5px #111;
`;
const Digits = styled.div`
  flex: 1;
  padding-left: 11px;
  color: #f00000;
  font-size: 37px;
  font-weight: 700;
  line-height: 34px;
  -webkit-text-stroke: 0.7px #f00000;
`;

/* right column */
const CanvasWrap = styled.div`
  height: 495px;
  flex: none;
  padding: 5px 0 0 8px;
`;
const ModelCanvas = styled.div`
  width: 785px;
  height: 487px;
  background: #000;
  display: flex;
  justify-content: center;
  padding: 194px 0 0 5px;
`;
const TabBar = styled.div`
  height: 23px;
  flex: none;
  display: flex;
  margin: 3px 10px 0 2px;
  border-top: 2px solid #8c8c8c;
`;
const EditorToolbar = styled.div`
  height: 39px;
  flex: none;
  display: flex;
  align-items: center;
  padding-bottom: 7px;
`;
const FieldLabel = styled.span`
  font-size: 11px;
  color: #222;
  margin-bottom: 8px;
`;
const RangeInput = styled(NumBox)`
  border: 1px solid #999;
  height: 21px;
  width: 36px;
`;
const EditorBox = styled.div`
  flex: 1;
  margin: 2px 10px 0 8px;
  background: #fff;
  border-top: 2px solid #777;
  border-left: 1px solid #888;
`;

/* taskbar */
const Orb = styled.div`
  width: 61px;
  display: flex;
  align-items: center;
  justify-content: center;
  padding-right: 4px;
`;
const TaskButton = styled.div<{ $w: number; $ml?: number; $active?: boolean }>`
  width: ${(p) => p.$w}px;
  margin-left: ${(p) => p.$ml ?? 0}px;
  flex: none;
  display: flex;
  align-items: center;
  gap: 8px;
  padding-left: 5px;
  white-space: nowrap;
  border: 1px solid rgba(190, 220, 240, 0.45);
  border-radius: 3px;
  background: ${(p) =>
    p.$active
      ? 'linear-gradient(rgba(255,255,255,.38), rgba(255,255,255,.22))'
      : 'linear-gradient(rgba(255,255,255,.2), rgba(255,255,255,.08))'};
`;
const TaskPlain = styled.div<{ $w: number }>`
  width: ${(p) => p.$w}px;
  flex: none;
  display: flex;
  align-items: center;
  justify-content: center;
`;
const Tray = styled.div`
  margin-left: auto;
  display: flex;
  align-items: center;
  gap: 6px;
  font-size: 12px;
`;
const TrayLang = styled.span`
  margin-right: 9px;
  margin-top: -6px;
  font-size: 11px;
`;
const Clock = styled.div`
  width: 66px;
  margin-left: 2px;
  text-align: center;
  line-height: 17px;
`;
const ShowDesktop = styled.div`
  width: 15px;
  margin-left: -5px;
  align-self: stretch;
  border-left: 1px solid #8aa8c0;
  background: linear-gradient(rgba(255,255,255,.4), rgba(255,255,255,.14));
`;

/* overlays */
const TestRun = styled.div`
  position: absolute;
  left: 1477px;
  top: 869px;
  width: 437px;
  height: 164px;
  background: #fff;
  border: 2px solid #555;
  display: flex;
  flex-direction: column;
`;
const RunHead = styled.div`
  height: 29px;
  flex: none;
  background: #e6e6e6;
  display: flex;
  align-items: center;
  gap: 9px;
  padding-left: 5px;
  font-size: 13.500px;
  font-weight: 700;
  color: #111;
`;
const RunBody = styled.div`
  flex: 1;
  padding: 3px 0 0 19px;
  color: #222;
  font-size: 11.100px;
`;
const RunTitle = styled.div`
  display: flex;
  align-items: center;
  gap: 7px;
  font-size: 13px;
  font-weight: 700;
  line-height: 16px;
`;
const RunTriangle = styled.span`
  width: 0;
  height: 0;
  border-left: 8px solid #555;
  border-top: 5px solid transparent;
  border-bottom: 5px solid transparent;
`;
const RunText = styled.div`
  margin: 3px 0 0 15px;
`;
const RunProgress = styled.div`
  display: flex;
  align-items: flex-start;
  margin: 37px 0 0 17px;
  color: #777;
  font-size: 12px;
`;
const ProgressLine = styled.div`
  width: 334px;
  height: 8px;
  margin-right: 30px;
  border-top: 1px solid #777;
  border-left: 1px solid #777;
`;
const ProgressValue = styled.span`
  margin-top: -1px;
`;
const RunFoot = styled.div`
  display: flex;
  align-items: center;
  gap: 4px;
  margin: 15px 0 0 -6px;
  color: #8a8a8a;
  font-size: 11px;
  line-height: 12px;
`;
const RunX = styled.span`
  color: #d01030;
  font-weight: 700;
  font-size: 12px;
  margin-top: 7px;
`;
const CursorMark = styled.div`
  position: absolute;
  left: 965px;
  top: 10px;
`;
const DialSvg = styled.svg`
  display: block;
`;

const Dial = () => (
  <DialWrap>
    <DialSvg width="46" height="46" viewBox="0 0 46 46">
      <circle cx="23" cy="23" r="22" fill="#ececec" stroke="#000" />
      {Array.from({ length: 12 }).map((_, i) => {
        const a = (i * Math.PI) / 6;
        return (
          <line key={i} x1={23 + 18 * Math.sin(a)} y1={23 - 18 * Math.cos(a)} x2={23 + 21 * Math.sin(a)} y2={23 - 21 * Math.cos(a)} stroke="#111" />
        );
      })}
      <path d="M23 6v17" stroke="#000" strokeWidth="1.500" />
      <path d="M20 11l3-5 3 5z" fill="#000" />
      <path d="M26 21c2 4-1 8-4 8s-5-2-5-3" fill="none" stroke="#222" />
    </DialSvg>
  </DialWrap>
);

const Gauge: FC<{ icon: ReactNode }> = ({ icon }) => (
  <>
    {icon}
    <Dial />
    <GaugeValue $w={37}>0</GaugeValue>
    <GaugeRule />
  </>
);

const eq = '='.repeat(100);
const eqEd = '='.repeat(77);
const dash = '-'.repeat(77);
const printText = [
  eq,
  'Routine Name' + ' '.repeat(52) + 'Run #' + ' '.repeat(12) + 'Date & Time',
  eq,
  ' '.repeat(69) + 'Friday, March 16, 2018 11:40:45',
  eq,
  eq,
  'Feature' + ' '.repeat(11) + 'Unit' + ' '.repeat(4) + 'Nominal' + ' '.repeat(7) + 'Actual' + ' '.repeat(10) + 'Tolerances' + ' '.repeat(11) + 'Deviation' + ' '.repeat(5) + 'Exceeded',
  eq,
  eq,
].join('\n');
const editorText = [eqEd, 'Header:', '', dash, 'Setup:', '', eqEd, 'Footer:', '', eqEd].join('\n');

const measureIcons = ['pt', 'mLine', 'mCircle', 'mAngle', 'mCross', 'scan', 'binary', 'rotate', 'plane', 'sphere', 'cyl', 'cone', 'curve', 'blob'];
const constructIcons = ['cPt', 'cLine', 'cCircle', 'cAngle', 'cCross', 'projPlane', 'discGray', 'tilted', 'axes', 'dist', 'rad', 'gPlane', 'gSphere', 'gCyl', 'gCone', 'listArrow', 'calc', 'decide', 'holeGray', 'gCurve'];
const trayIcons = ['trayPill', 'trayNet', 'trayNvidia', 'trayLeaf', 'trayPrint', 'trayLock', 'trayFlag', 'trayMonitor', 'traySound'];

const App = () => (
  <Screen>
    <GlobalStyle />
    <TitleBar>
      <Icon n="globe" s={18} />
      Measure-X - [Untitled]
      <TitleButtons>
        <TitleButton $w={27} $c="rgba(255,255,255,.18)">–</TitleButton>
        <TitleButton $w={28} $c="rgba(255,255,255,.18)">▫</TitleButton>
        <TitleButton $w={42} $c="rgba(190,90,90,.55)">×</TitleButton>
      </TitleButtons>
    </TitleBar>
    <MenuBar>
      {['File', 'Edit', 'View', 'Units', 'Targets', 'Tools', 'Measure'].map((m) => (
        <span key={m}>{m}</span>
      ))}
    </MenuBar>
    <Workspace>
      <LeftCol>
        <TopBar>
          <ToolRow
            origin={4}
            h={42}
            items={[
              { x: 27, n: 'openCam' },
              { x: 58, n: 'saveCam' },
              { x: 80, w: 8, node: <span>▾</span> },
              { x: 104, n: 'printCam' },
              { x: 126, w: 8, node: <span>▾</span> },
              { x: 168, n: 'palette' },
              { x: 199, n: 'zoomOut' },
              { x: 243, w: 44, h: 29, node: <LowHigh>Low</LowHigh> },
              {
                x: 380,
                w: 228,
                h: 31,
                node: (
                  <BlackSlider>
                    <BlackTrack />
                    <BlackTicks />
                    <SliderThumb $x={9} />
                  </BlackSlider>
                ),
              },
              { x: 517, w: 44, h: 29, node: <LowHigh>High</LowHigh> },
              { x: 559, n: 'zoomIn' },
              { x: 604, w: 50, h: 23, node: <ZoomValue $w={50}>0.000</ZoomValue> },
              { x: 651, n: 'movie' },
            ]}
          />
        </TopBar>
        <CameraArea>
          <VideoPane>
            <VideoFeed>
              <span>Light&nbsp;&nbsp;79%</span>
              <span>MAG 0.000x</span>
            </VideoFeed>
          </VideoPane>
          <GaugeCol>
            <Gauge
              icon={
                <GaugeButtons>
                  <SmallBtn $w={21}>
                    <Icon n="lens" s={22} />
                  </SmallBtn>
                  <SmallBtn $w={22}>...</SmallBtn>
                </GaugeButtons>
              }
            />
            <Gauge
              icon={
                <SmallBtn $w={22}>
                  <Icon n="bulbY" s={22} />
                </SmallBtn>
              }
            />
            <Gauge
              icon={
                <SmallBtn $w={22}>
                  <Icon n="bulbR" s={22} />
                </SmallBtn>
              }
            />
          </GaugeCol>
        </CameraArea>
        <SettingsRow>
          <SettingsPanel>
            <WeakBox $h={138}>
              <Legend>Weak Edge Settings</Legend>
              {[
                ['Points', 'Max', '30', 50],
                ['Rough', 'Smooth', '50', 31],
                ['Weak', 'Strong', '50', 94],
              ].map(([a, b, v, pos]) => (
                <WeakRow key={a as string}>
                  <span>{a}</span>
                  <WeakSlider>
                    <WeakTrack />
                    <WeakTicks />
                    <WeakThumb $x={pos as number} />
                  </WeakSlider>
                  <RightLabel>{b}</RightLabel>
                  <NumBox $w={30}>{v}</NumBox>
                </WeakRow>
              ))}
              <Focus>
                <FocusBox />
                Focus First
              </Focus>
            </WeakBox>
            <ActionRow>
              <ActionButton>
                <u>R</u>emeasure
              </ActionButton>
              <ActionButton>
                R<u>e</u>set
              </ActionButton>
              <ActionButton>
                <u>A</u>dvanced
              </ActionButton>
            </ActionRow>
          </SettingsPanel>
          <TargetPanel>
            <ToolRow origin={388} items={[{ x: 480, n: 'tPlus' }, { x: 524, n: 'tDash' }, { x: 569, n: 'tHash' }, { x: 612, n: 'tCirc' }, { x: 657, n: 'tRings' }, { x: 707, n: 'tCone' }]} />
            <ToolRow origin={388} mt={11} items={[{ x: 480, n: 't3Ring' }, { x: 524, n: 'tGrid' }, { x: 569, n: 'tArch' }, { x: 612, n: 'tArrow' }, { x: 657, n: 'tArc' }, { x: 701, n: 'tSquare' }]} />
            <ToolRow origin={388} mt={17} items={[{ x: 480, n: 'tCrossSq' }, { x: 524.5, w: 44, h: 40, on: true, n: 'tTarget' }, { x: 569, n: 'tSquare' }, { x: 612, n: 'tBrackets' }, { x: 657, n: 'tProbe' }, { x: 705, n: 'tLaser' }]} />
            <ToolRow origin={388} mt={10} items={[{ x: 480, n: 'tMt1' }, { x: 524, n: 'tMt2' }, { x: 569, n: 'tMt3' }, { x: 612, n: 'tBlob' }, { x: 657, n: 'tBlobFill' }, { x: 700, n: 'tHeart' }]} />
          </TargetPanel>
        </SettingsRow>
        <PrintPanel>
          <PrintHead $w="787px">Print Data</PrintHead>
          <PrintToolbar>
            <ToolRow origin={4} items={[{ x: 24, n: 'floppyList' }, { x: 56, n: 'printList' }, { x: 95, n: 'Aa' }, { x: 762, n: 'xx' }]} />
          </PrintToolbar>
          <PrintBox>
            <MonoText $size={11.667} $lh={17} $pt={4}>{printText}</MonoText>
            <Scroll>
              <ScrollArrow>▲</ScrollArrow>
              <ScrollThumb>
                <Grip />
              </ScrollThumb>
              <ScrollArrow $end>▼</ScrollArrow>
            </Scroll>
          </PrintBox>
        </PrintPanel>
      </LeftCol>
      <MidCol>
        <TopBar>
          <ToolRow
            origin={796}
            h={42}
            items={[
              { x: 824, n: 'logo' },
              { x: 880, w: 68, node: <FitLabel>MeasureFit...</FitLabel> },
              { x: 1044, n: 'book' },
              { x: 1081, n: 'help' },
            ]}
          />
        </TopBar>
        <GroupStack>
          <ToolGroup $h={76}>
            <Legend>Routine</Legend>
            <GroupInner $pt={20}>
              <ToolRow origin={818} items={[{ x: 863, n: 'doc' }, { x: 909, n: 'open' }, { x: 951, n: 'saveGray' }, { x: 996, n: 'saveAsGray' }, { x: 1040, n: 'playGray' }]} />
            </GroupInner>
          </ToolGroup>
          <ToolGroup $h={76}>
            <Legend>Edit</Legend>
            <GroupInner $pt={19}>
              <ToolRow origin={818} items={[{ x: 864, n: 'copyA' }, { x: 907, n: 'copyB' }, { x: 959, n: 'pencilDoc' }, { x: 1003, n: 'pasteDoc' }]} />
            </GroupInner>
          </ToolGroup>
          <ToolGroup $h={76}>
            <Legend>Units</Legend>
            <GroupInner $pt={20}>
              <ToolRow
                origin={818}
                items={[
                  { x: 863, w: 34, n: 'inch' },
                  { x: 907.5, w: 43, h: 40, on: true, n: 'mm' },
                  { x: 960, w: 44, h: 40, on: true, n: 'xyz' },
                  { x: 1003, n: 'raz' },
                ]}
              />
            </GroupInner>
          </ToolGroup>
          <ToolGroup $h={161}>
            <Legend>Measure</Legend>
            <IconGrid $pl={23} $row={42.5}>
              {measureIcons.map((n) => (
                <Icon key={n} n={n} />
              ))}
            </IconGrid>
          </ToolGroup>
          <ToolGroup $h={199}>
            <Legend>Construct</Legend>
            <IconGrid $pl={24} $row={42.3}>
              {constructIcons.map((n) => (
                <Icon key={n} n={n} />
              ))}
            </IconGrid>
          </ToolGroup>
        </GroupStack>
        <Status>
          <StatusLine $c="#0000e0" $lift>Ready</StatusLine>
          <StatusLine $c="#0000e0">No Routine</StatusLine>
          <StatusLine $c="#f00000">License expires in 16 days!</StatusLine>
        </Status>
        <Dro>
          <DroRow>
            <DroButton>X</DroButton>
            <Digits>+0.000000</Digits>
            <DroButton>
              <Svg width="30" height="30" viewBox="0 0 30 30">
                <path d="M24 6C18 0 8 1 5 9c-3 8 2 16 10 16 4 0 7-2 9-5" fill="none" stroke="#1010e0" strokeWidth="3" />
                <text x="16" y="19" textAnchor="middle" fontFamily="Liberation Sans" fontSize="18" fill="#1010e0" stroke="none">A</text>
                <circle cx="3" cy="26" r="3.500" fill="#a01818" />
              </Svg>
            </DroButton>
          </DroRow>
          <DroRow>
            <DroButton>Y</DroButton>
            <Digits>+0.000000</Digits>
            <DroButton>
              <Svg width="30" height="30" viewBox="0 0 30 30">
                <path d="M15 2l5 6h-3v5h5v-3l6 5-6 5v-3h-5v5h3l-5 6-5-6h3v-5H8v3l-6-5 6-5v3h5V8h-3z" fill="#111" />
              </Svg>
            </DroButton>
          </DroRow>
          <DroRow>
            <DroButton>Z</DroButton>
            <Digits>+0.000000</Digits>
          </DroRow>
          <DroRow>
            <DroButton $bg="#0aa020">
              <Svg width="30" height="30" viewBox="0 0 30 30">
                <path d="M6 12l8-9 7 6-9 9z" fill="#888" stroke="#333" />
                <path d="M2 22h28M8 22L22 4" stroke="#0c6a7a" strokeWidth="1.400" />
                <circle cx="5" cy="26" r="3.500" fill="#a01818" />
              </Svg>
            </DroButton>
            <DroButton $ml={9}>
              <Svg width="30" height="30" viewBox="0 0 30 30">
                <path d="M3 28L27 4" stroke="#000" strokeWidth="2.500" />
                <text x="2" y="11" fontFamily="Liberation Sans" fontWeight="400" fontSize="9" fill="#111" stroke="none">in</text>
                <text x="14" y="28" fontFamily="Liberation Sans" fontWeight="400" fontSize="9" fill="#111" stroke="none">mm</text>
                <circle cx="7" cy="15" r="3" fill="#c8c8c8" />
                <circle cx="23" cy="15" r="3" fill="#20d020" />
              </Svg>
            </DroButton>
            <DroButton $ml={9}>
              <Svg width="30" height="30" viewBox="0 0 30 30">
                <path d="M3 28L27 4" stroke="#000" strokeWidth="2.500" />
                <text x="2" y="11" fontFamily="Liberation Sans" fontWeight="400" fontSize="9" fill="#111" stroke="none">XY</text>
                <text x="15" y="28" fontFamily="Liberation Sans" fontWeight="400" fontSize="9" fill="#111" stroke="none">R A</text>
                <circle cx="7" cy="15" r="3" fill="#20d020" />
                <circle cx="23" cy="15" r="3" fill="#c8c8c8" />
              </Svg>
            </DroButton>
            <DroButton $bg="#fff" $w={77} $ml={98}>
              <Svg width="75" height="30" viewBox="0 0 75 30">
                <circle cx="38" cy="16" r="13" fill="none" stroke="#000" strokeWidth="1.600" />
                <path d="M38 4v23" stroke="#000" strokeWidth="1.600" />
                <circle cx="5" cy="25" r="3" fill="#f0f020" stroke="#555" />
              </Svg>
            </DroButton>
          </DroRow>
        </Dro>
      </MidCol>
      <RightCol>
        <TopBar>
          <ToolRow
            origin={1110}
            h={42}
            items={[
              { x: 1131, n: 'saveZero' },
              { x: 1164, n: 'printZero' },
              { x: 1199, n: 'zoomFit' },
              { x: 1231, n: 'zoomIn' },
              { x: 1262, n: 'zoomOut' },
              { x: 1299, n: 'cubeA' },
              { x: 1330, n: 'cubeB' },
              { x: 1360, n: 'cubeC' },
              { x: 1398, n: 'bars' },
              { x: 1436.5, w: 31, h: 29, on: true, n: 'gBlob' },
              { x: 1466, w: 28, n: 'pinkCirc' },
              { x: 1497, w: 28, n: 'yellowDots' },
              { x: 1534, n: 'greenMag' },
              { x: 1573, n: 'triangle' },
              { x: 1609, n: 'note' },
              { x: 1632, w: 10, node: <span>▾</span> },
              { x: 1675.5, w: 31, h: 29, on: true, n: 'layers' },
              {
                x: 1713,
                w: 30,
                node: (
                  <Svg viewBox="0 0 30 32" width="30" height="32">
                    <rect x="10" y="3" width="10" height="13" fill="#12c8d8" stroke="#123" />
                    <text x="15" y="27" textAnchor="middle" fontFamily="Liberation Sans" fontSize="11" fill="#222">MCS</text>
                  </Svg>
                ),
              },
            ]}
          />
        </TopBar>
        <CanvasWrap>
          <ModelCanvas>
            <Svg width="120" height="100" viewBox="0 0 120 100">
              <rect x="12.500" y="15.500" width="89" height="67" fill="none" stroke="#4058b8" />
              <path d="M56 27v21" stroke="#7a9a70" />
              <path d="M52 29l4-14 4 14z" fill="#30d050" />
              <path d="M56 48h24" stroke="#d08080" />
              <path d="M76 44l16 4-16 4z" fill="#e06068" />
              <rect x="53" y="45" width="6" height="6" fill="#c8c050" />
              <text x="56" y="9" textAnchor="middle" fontFamily="Liberation Sans" fontSize="11" fill="#ddd">Y</text>
              <text x="102" y="52" textAnchor="middle" fontFamily="Liberation Sans" fontSize="11" fill="#ddd">X</text>
            </Svg>
          </ModelCanvas>
        </CanvasWrap>
        <TabBar>
          <PanelHead $w="396px">Enhanced Editor</PanelHead>
          <PanelHead $w="395px" $dim>CAD Navigator</PanelHead>
        </TabBar>
        <EditorToolbar>
          <ToolRow
            origin={1110}
            items={[
              { x: 1131, n: 'floppyList' },
              { x: 1164, n: 'printList' },
              { x: 1203, w: 24, node: <FieldLabel>From</FieldLabel> },
              { x: 1239.5, w: 36, h: 21, node: <RangeInput $w={36}>0</RangeInput> },
              { x: 1282, w: 14, node: <FieldLabel>To</FieldLabel> },
              { x: 1313, w: 36, h: 21, node: <RangeInput $w={36}>0</RangeInput> },
              { x: 1364, w: 24, n: 'page1' },
              { x: 1398.5, w: 31, h: 29, on: true, n: 'page2' },
              { x: 1428, w: 24, n: 'page3' },
              { x: 1472, n: 'Aa' },
              { x: 1510, n: 'abc' },
            ]}
          />
        </EditorToolbar>
        <EditorBox>
          <MonoText $size={11} $lh={18} $pl={2}>{editorText}</MonoText>
        </EditorBox>
      </RightCol>
    </Workspace>
    <Gap />
    <Taskbar>
      <Orb>
        <Icon n="orb" s={36} />
      </Orb>
      <TaskButton $w={157}>
        <Icon n="ie" s={34} />
        georgi86/CheckT...
      </TaskButton>
      <TaskPlain $w={68}>
        <Icon n="chrome" s={32} />
      </TaskPlain>
      <TaskPlain $w={60}>
        <Icon n="media" s={30} />
      </TaskPlain>
      <TaskButton $w={160}>
        <Icon n="computer" s={32} />
        Computer
      </TaskButton>
      <TaskButton $w={159}>
        <Icon n="folder" s={32} />
        CopyLine
      </TaskButton>
      <TaskButton $w={159} $ml={2}>
        <Icon n="skype" s={32} />
        Skype™ - mx_team
      </TaskButton>
      <TaskButton $w={161} $ml={3}>
        <Icon n="ranorexX" s={32} />
        CopyLine - Ranor...
      </TaskButton>
      <TaskButton $w={156} $ml={5}>
        <Icon n="cmd" s={30} />
        C:\Windows\syst...
      </TaskButton>
      <TaskButton $w={159} $ml={2} $active>
        <Icon n="globe" s={30} />
        Measure-X - [D:\U...
      </TaskButton>
      <Tray>
        <TrayLang>EN</TrayLang>
        {trayIcons.map((n) => (
          <Icon key={n} n={n} s={18} />
        ))}
        <Clock>
          11:40
          <br />
          3/16/2018
        </Clock>
        <ShowDesktop />
      </Tray>
    </Taskbar>
    <TestRun>
      <RunHead>
        <Svg width="20" height="20" viewBox="0 0 20 20">
          <path d="M0 2h8l2 2h10v15H0z" fill="#3aa077" />
          <path d="M8 8l6 4-6 4z" fill="#24684c" />
        </Svg>
        Ranorex Test Run
      </RunHead>
      <RunBody>
        <RunTitle>
          <RunTriangle />
          Recording1
        </RunTitle>
        <RunText>Searching item 'MeasureXUntitled' in 'MeasureXUntitled'</RunText>
        <RunProgress>
          <ProgressLine />
          <ProgressValue>2.5m</ProgressValue>
        </RunProgress>
        <RunFoot>
          <RunX>✖</RunX>
          <div>
            Press 'Pause' to abort.
            <br />
            Press 'Shift-Pause' to skip delays and timeouts.
          </div>
        </RunFoot>
      </RunBody>
    </TestRun>
    <CursorMark>
      <svg width="18" height="24" viewBox="0 0 18 24">
        <path d="M1 1v18l5-4 3 7 3-1-3-7h7z" fill="#fff" stroke="#000" />
      </svg>
    </CursorMark>
  </Screen>
);

export default App;
